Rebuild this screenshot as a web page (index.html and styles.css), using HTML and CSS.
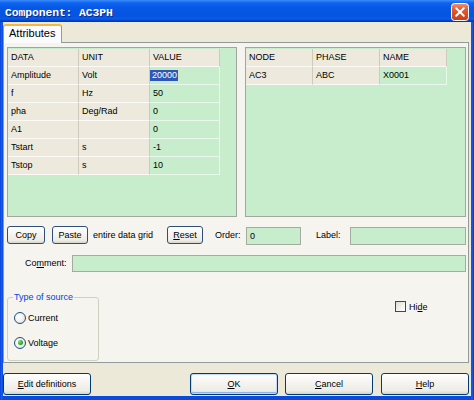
FILE: index.html
```html
<!DOCTYPE html>
<html>
<head>
<meta charset="utf-8">
<title>Component: AC3PH</title>
<link rel="stylesheet" href="styles.css">
</head>
<body>
<div class="window">
  <div class="titlebar">
    <span class="title">Component: AC3PH</span>
    <span class="close">
      <svg width="18" height="18" viewBox="0 0 18 18">
        <defs>
          <linearGradient id="cg" x1="0" y1="0" x2="0" y2="1">
            <stop offset="0" stop-color="#EE9474"/>
            <stop offset="0.35" stop-color="#E25B32"/>
            <stop offset="1" stop-color="#C63E1A"/>
          </linearGradient>
        </defs>
        <rect x="0.5" y="0.5" width="17" height="17" rx="3" fill="url(#cg)" stroke="#ffffff"/>
        <path d="M5.2 5.2 L12.8 12.8 M12.8 5.2 L5.2 12.8" stroke="#ffffff" stroke-width="2" stroke-linecap="round"/>
      </svg>
    </span>
  </div>
  <div class="client">
    <div class="tabs"><div class="tab">Attributes</div></div>
    <div class="panel">
      <div class="grids">
        <div class="gridbox gb-left">
          <div class="grid g-left">
            <div class="c h">DATA</div><div class="c h">UNIT</div><div class="c h">VALUE</div>
            <div class="c k">Amplitude</div><div class="c k">Volt</div><div class="c v"><span class="sel">20000</span></div>
            <div class="c k">f</div><div class="c k">Hz</div><div class="c v">50</div>
            <div class="c k">pha</div><div class="c k">Deg/Rad</div><div class="c v">0</div>
            <div class="c k">A1</div><div class="c k"></div><div class="c v">0</div>
            <div class="c k">Tstart</div><div class="c k">s</div><div class="c v">-1</div>
            <div class="c k">Tstop</div><div class="c k">s</div><div class="c v">10</div>
          </div>
        </div>
        <div class="gridbox gb-right">
          <div class="grid g-right">
            <div class="c h">NODE</div><div class="c h">PHASE</div><div class="c h">NAME</div>
            <div class="c k">AC3</div><div class="c k">ABC</div><div class="c v">X0001</div>
          </div>
        </div>
      </div>

      <div class="actions">
        <div class="btn sm b-copy">Copy</div>
        <div class="btn sm b-paste">Paste</div>
        <span class="txt t-entire">entire data grid</span>
        <div class="btn sm b-reset"><u>R</u>eset</div>
        <span class="txt t-order">Order:</span>
        <div class="field f-order">0</div>
        <span class="txt t-label">Label:</span>
        <div class="field f-label"></div>
      </div>

      <div class="comment">
        <span class="txt t-comment">Co<u>m</u>ment:</span>
        <div class="field f-comment"></div>
      </div>

      <div class="lower">
        <fieldset class="group">
          <legend>Type of source</legend>
          <div class="opt o-first"><span class="radio"></span><span class="opt-text">Current</span></div>
          <div class="opt o-second"><span class="radio on"></span><span class="opt-text">Voltage</span></div>
        </fieldset>
        <div class="check"><span class="box"></span><span class="check-text">Hi<u>d</u>e</span></div>
      </div>
    </div>

    <div class="footer">
      <div class="btn lg b-edit"><u>E</u>dit definitions</div>
      <div class="btn lg def b-ok"><u>O</u>K</div>
      <div class="btn lg b-cancel"><u>C</u>ancel</div>
      <div class="btn lg b-help"><u>H</u>elp</div>
    </div>
  </div>
</div>
</body>
</html>
```

FILE: styles.css
```css
* { box-sizing: border-box; }

html, body {
  margin: 0;
  padding: 0;
}

body {
  width: 474px;
  height: 400px;
  overflow: hidden;
  font-family: "Liberation Sans", Arial, sans-serif;
  font-size: 9px;
  color: #000;
  background: #0A45D8;
}

.window {
  width: 474px;
  height: 400px;
  display: flex;
  flex-direction: column;
  background: linear-gradient(to right, #0636C8 0, #1660F0 1px, #0A4BDF 3px, #0A4BDF 471px, #1660F0 472px, #0636C8 474px);
}

/* ---------- title bar ---------- */
.titlebar {
  height: 22px;
  flex: none;
  display: flex;
  align-items: center;
  padding-left: 5px;
  background: linear-gradient(to bottom, #3B8CFB 0, #0E63EE 3px, #0558E6 8px, #0654E0 16px, #0A5BE8 19px, #003DBE 21px, #0037B0 22px);
}

.title {
  font-family: "Liberation Mono", "DejaVu Sans Mono", monospace;
  font-weight: bold;
  font-size: 11.4px;
  color: #fff;
  text-shadow: 1px 1px 0 #0B2A8A;
  letter-spacing: -0.1px;
  margin-top: 3px;
}

.close {
  margin-left: auto;
  margin-right: 5px;
  width: 18px;
  height: 18px;
  display: flex;
  margin-top: 2px;
}

/* ---------- client area ---------- */
.client {
  flex: 1;
  margin: 0 3px 4px 3px;
  background: #ECE9D8;
  display: flex;
  flex-direction: column;
}

.tabs {
  height: 20px;
  flex: none;
  display: flex;
  align-items: flex-end;
}

.tab {
  position: relative;
  z-index: 1;
  width: 59px;
  height: 19px;
  margin-bottom: -1px;
  border: 1px solid #919B9C;
  border-bottom: none;
  border-top: 2px solid #F6B63F;
  border-radius: 3px 3px 0 0;
  background: #FCFCFE;
  font-size: 11px;
  line-height: 15px;
  padding-left: 5px;
  color: #000;
}

.panel {
  height: 321px;
  flex: none;
  margin-right: 2px;
  border: 1px solid #919B9C;
  background: #F5F4EF;
  padding: 4px 2px 0 3px;
  display: flex;
  flex-direction: column;
}

/* ---------- grids ---------- */
.grids {
  display: flex;
  gap: 8px;
  height: 170px;
  flex: none;
}

.gridbox {
  height: 170px;
  border: 1px solid #A3A69C;
  background: #C8EDCC;
  padding-top: 1px;
}

.gb-left { width: 230px; }
.gb-right { width: 221px; }

.grid {
  display: grid;
  grid-auto-rows: 18px;
  width: max-content;
}

.g-left { grid-template-columns: 71px 71px 70px; }
.g-right { grid-template-columns: 67px 67px 67px; }

.c {
  padding-left: 3px;
  line-height: 17px;
  white-space: nowrap;
  overflow: hidden;
  border-right: 1px solid #FFFFFF;
  border-bottom: 1px solid #FFFFFF;
}

.h, .k {
  background: #EDEADD;
  border-right-color: #CFCBBA;
  border-bottom-color: #FBFAF6;
}

.v {
  background: #C8EDCC;
  border-right-color: #EAF7EC;
  border-bottom-color: #EAF7EC;
}

.sel {
  display: inline-block;
  margin-left: -3px;
  padding: 0 1px 0 2px;
  line-height: 11px;
  background: #2D58B5;
  color: #fff;
}

/* ---------- action row ---------- */
.actions {
  margin-top: 9px;
  height: 19px;
  flex: none;
  display: flex;
  align-items: flex-start;
}

.btn {
  display: flex;
  align-items: center;
  justify-content: center;
  border: 1px solid #2E4F78;
  border-radius: 3px;
  background: linear-gradient(to bottom, #FFFFFF 0, #F6F5F1 40%, #ECEBE5 85%, #D8D3C6 100%);
  white-space: nowrap;
  color: #000;
}

.btn.sm { height: 18px; }

.b-copy { width: 38px; }
.b-paste { width: 36px; margin-left: 7px; }
.b-reset { width: 36px; margin-left: 12px; }

.txt {
  line-height: 18px;
  white-space: nowrap;
}

.t-entire { width: 62px; margin-left: 5px; }
.t-order { width: 31px; margin-left: 12px; }
.t-label { width: 34px; margin-left: 15px; }

.field {
  height: 18px;
  margin-top: 1px;
  border: 1px solid #A6ABA0;
  background: #C8EDCC;
  padding-left: 3px;
  line-height: 16px;
}

.f-order { width: 55px; }
.f-label { width: 116px; }

/* ---------- comment row ---------- */
.comment {
  margin-top: 10px;
  height: 17px;
  flex: none;
  display: flex;
  align-items: center;
}

.t-comment {
  width: 47px;
  margin-left: 18px;
  line-height: 17px;
}

.f-comment {
  flex: 1;
  height: 17px;
  margin-top: 0;
}

/* ---------- lower area ---------- */
.lower {
  margin-top: 20px;
  display: flex;
  align-items: flex-start;
}

.group {
  width: 92px;
  height: 69px;
  margin: 0;
  padding: 0 0 0 5px;
  border: 1px solid #D0D0BF;
  border-radius: 3px;
}

.group legend {
  padding: 0 1px;
  font-size: 9px;
  line-height: 11px;
  color: #0046D5;
}

.opt {
  display: flex;
  align-items: center;
  height: 13px;
  padding-left: 1px;
}

.o-first { margin-top: 8px; }
.o-second { margin-top: 12px; }

.radio {
  width: 12px;
  height: 12px;
  border-radius: 50%;
  border: 1px solid #1C5180;
  background: radial-gradient(circle at 40% 40%, #FFFFFF 0, #F2F1EC 50%, #D6D4C8 100%);
  display: flex;
  align-items: center;
  justify-content: center;
}

.radio.on::after {
  content: "";
  width: 5px;
  height: 5px;
  border-radius: 50%;
  background: radial-gradient(circle at 35% 35%, #7BE07B 0, #2EA42E 60%, #1C8A1C 100%);
}

.opt-text { margin-left: 2px; }

.check {
  margin-left: 296px;
  margin-top: 9px;
  display: flex;
  align-items: center;
}

.box {
  width: 11px;
  height: 11px;
  border: 1px solid #1C5180;
  background: linear-gradient(135deg, #DCDBD3 0, #F4F4F0 60%, #FFFFFF 100%);
}

.check-text { margin-left: 3px; }

/* ---------- footer ---------- */
.footer {
  margin-top: 10px;
  height: 22px;
  flex: none;
  display: flex;
}

.btn.lg {
  width: 88px;
  height: 22px;
  border-color: #003C74;
}

.btn.def {
  box-shadow: inset 0 0 0 1px #C2DAFA, inset 0 -1px 0 1px #8FB2EB;
}

.b-ok { margin-left: 99px; }
.b-cancel { margin-left: 7px; }
.b-help { margin-left: 8px; }
```
